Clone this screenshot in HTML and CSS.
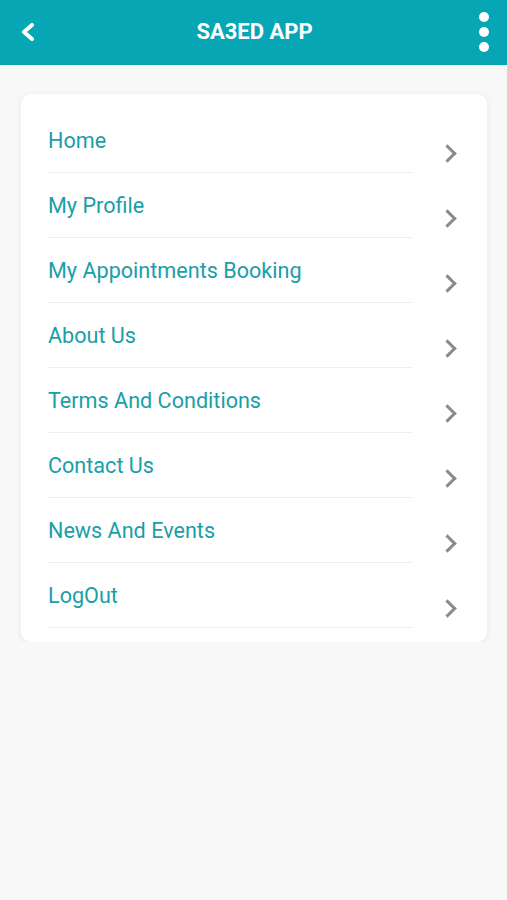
FILE: index.html
```html
<!DOCTYPE html>
<html>

<head>
    <title>SA3ED APP</title>
    <link rel="stylesheet" href="styles.css">
</head>

<body>
    <header class="topbar">
        <a class="back-btn" href="#back">
            <svg width="16" height="18" viewBox="0 0 16 18">
                <path d="M12 2 L4 9 L12 16" fill="none" stroke="#fff" stroke-width="4" stroke-linecap="round" stroke-linejoin="round"/>
            </svg>
        </a>
        <h1 class="title">SA3ED APP</h1>
        <div class="more-btn">
            <span class="dot"></span>
            <span class="dot"></span>
            <span class="dot"></span>
        </div>
    </header>

    <div class="menu-card">
        <ul class="menu-list">
            <li class="menu-item"><a class="menu-link" href="#home">Home</a><span class="arrow"></span></li>
            <li class="menu-item"><a class="menu-link" href="#profile">My Profile</a><span class="arrow"></span></li>
            <li class="menu-item"><a class="menu-link" href="#booking">My Appointments Booking</a><span class="arrow"></span></li>
            <li class="menu-item"><a class="menu-link" href="#about">About Us</a><span class="arrow"></span></li>
            <li class="menu-item"><a class="menu-link" href="#terms">Terms And Conditions</a><span class="arrow"></span></li>
            <li class="menu-item"><a class="menu-link" href="#contact">Contact Us</a><span class="arrow"></span></li>
            <li class="menu-item"><a class="menu-link" href="#news">News And Events</a><span class="arrow"></span></li>
            <li class="menu-item"><a class="menu-link" href="#logout">LogOut</a><span class="arrow"></span></li>
        </ul>
    </div>
</body>

</html>
```

FILE: styles.css
```css
body {
    margin: 0;
    background-color: #f8f8f8;
    font-family: Roboto, "Liberation Sans", sans-serif;
}

.topbar {
    height: 65px;
    background-color: #07a6b5;
    display: flex;
    align-items: center;
    justify-content: space-between;
    padding: 0 18px 0 20px;
    box-sizing: border-box;
}

.back-btn {
    display: flex;
    width: 30px;
    margin-top: -2px;
}

.title {
    margin: 0;
    color: #fff;
    font-size: 22px;
    font-weight: bold;
    margin-top: -2px;
}

.more-btn {
    width: 30px;
    display: flex;
    flex-direction: column;
    align-items: flex-end;
    gap: 5px;
    margin-top: -2px;
}

.dot {
    width: 10px;
    height: 10px;
    border-radius: 50%;
    background-color: #fff;
}

.menu-card {
    margin: 29px 20px 0 21px;
    background-color: #fff;
    border-radius: 10px;
    box-shadow: 0 1px 6px rgba(0, 0, 0, 0.08);
    padding: 14px 0 14px 27px;
}

.menu-list {
    list-style-type: none;
    margin: 0;
    padding: 0;
}

.menu-item {
    height: 65px;
    position: relative;
    display: flex;
    align-items: center;
}

.menu-item::after {
    content: "";
    position: absolute;
    left: 0;
    bottom: 0;
    width: 364px;
    border-bottom: 1px solid #eeeeee;
}

.menu-link {
    color: #1a9ea8;
    text-decoration: none;
    font-size: 21.6px;
    margin-top: -1px;
}

.arrow {
    position: absolute;
    right: 33px;
    top: 39px;
    width: 10px;
    height: 10px;
    border-top: 3.5px solid #8a8a8a;
    border-right: 3.5px solid #8a8a8a;
    transform: rotate(45deg);
}
```
